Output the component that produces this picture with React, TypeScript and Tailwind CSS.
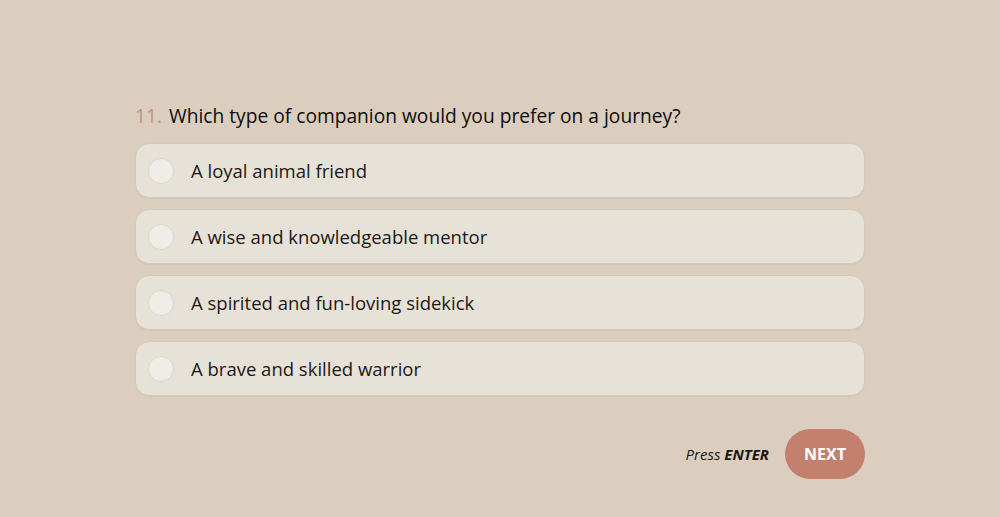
import React from "react";

const options = [
  "A loyal animal friend",
  "A wise and knowledgeable mentor",
  "A spirited and fun-loving sidekick",
  "A brave and skilled warrior",
];

export default function App() {
  return (
    <div
      className="w-[1000px] h-[517px] bg-[#dccebe] flex justify-center"
      style={{ fontFamily: '"Open Sans", sans-serif' }}
    >
      <div className="w-[730px] pt-[103px]">
        <div className="flex items-baseline text-[19.2px] leading-[26px]">
          <span className="text-[#c98f7f] w-[34px]">11.</span>
          <span className="text-[#0f0c0a]">Which type of companion would you prefer on a journey?</span>
        </div>
        <div className="mt-[14px] flex flex-col gap-[11px]">
          {options.map((o) => (
            <div
              key={o}
              className="h-[55px] rounded-[14px] bg-[#e7e2d8] border border-[#d3c8ba] shadow-[0_1px_1px_rgba(0,0,0,0.04)] flex items-center pl-[12px]"
            >
              <div className="w-[26px] h-[26px] rounded-full bg-[#f0ede8] border border-[#ddd5cb]" />
              <span className="ml-[17px] text-[18.5px] text-[#1d1815]">{o}</span>
            </div>
          ))}
        </div>
        <div className="mt-[33px] flex items-center justify-end gap-[16px]">
          <span className="italic text-[15px] text-[#1a1512]">
            Press <b className="font-bold">ENTER</b>
          </span>
          <button className="w-[80px] h-[50px] rounded-full bg-[#c4806f] text-white font-bold text-[16px]">
            NEXT
          </button>
        </div>
      </div>
    </div>
  );
}
